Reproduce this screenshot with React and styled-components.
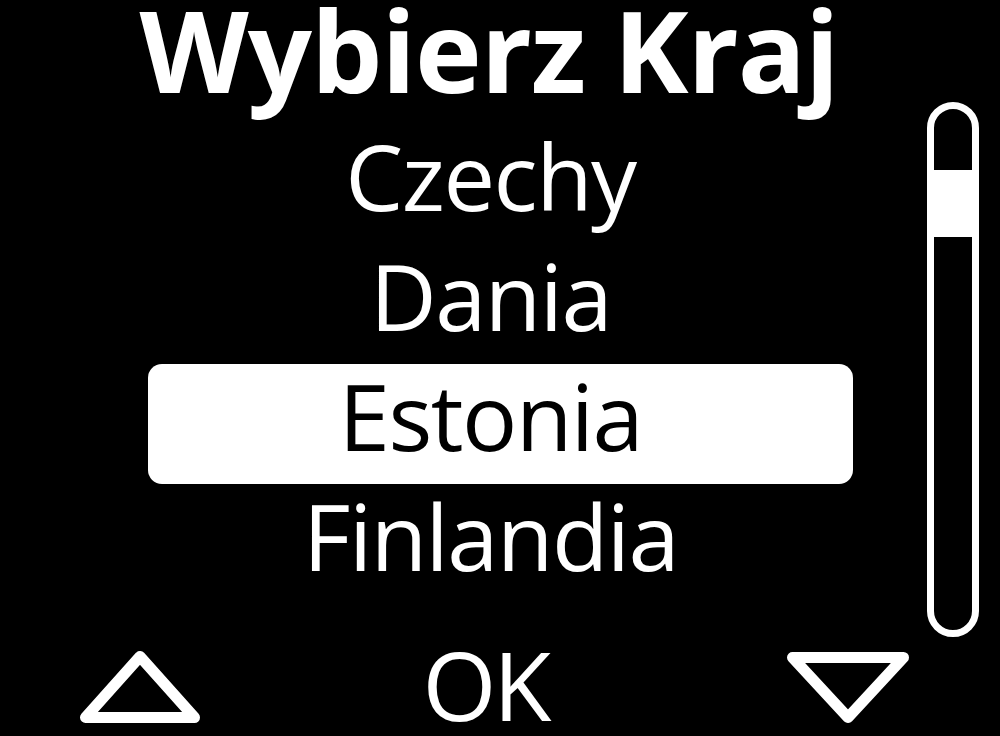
import React from "react";
import styled, { createGlobalStyle } from "styled-components";

const countries = ["Czechy", "Dania", "Estonia", "Finlandia"];
const selectedIndex = 2;

const GlobalStyle = createGlobalStyle`
  html, body {
    margin: 0;
    padding: 0;
    background: #000;
  }
  * {
    box-sizing: border-box;
  }
`;

function App() {
  return (
    <>
      <GlobalStyle />
      <Screen>
        <Title>Wybierz Kraj</Title>
        <Body>
          <List>
            {countries.map((name, i) => (
              <Row key={name} selected={i === selectedIndex}>
                {name}
              </Row>
            ))}
          </List>
          <Track>
            <Thumb style={{ marginTop: 61 }} />
          </Track>
        </Body>
        <Footer>
          <ArrowUp />
          <OkLabel>OK</OkLabel>
          <ArrowDown />
        </Footer>
      </Screen>
    </>
  );
}

function ArrowUp() {
  return (
    <Arrow width="120" height="72" viewBox="0 0 120 72">
      <polygon points="60,5.5 5.5,66.5 114.5,66.5" />
    </Arrow>
  );
}

function ArrowDown() {
  return (
    <Arrow width="122" height="71" viewBox="0 0 122 71" down>
      <polygon points="5.5,5.5 116.5,5.5 61,65.5" />
    </Arrow>
  );
}

const Screen = styled.div`
  width: 1000px;
  height: 736px;
  overflow: hidden;
  background: #000;
  color: #fff;
  font-family: "Open Sans", "Noto Sans", sans-serif;
  display: flex;
  flex-direction: column;
`;

const Title = styled.h1`
  margin: 0;
  height: 102px;
  padding-right: 22px;
  text-align: center;
  font-size: 113px;
  font-weight: 700;
  line-height: 98px;
  letter-spacing: -1px;
`;

const Body = styled.div`
  display: flex;
  height: 535px;
`;

const List = styled.ul`
  list-style: none;
  margin: 22px 0 0 148px;
  padding: 0;
  width: 705px;
`;

const Row = styled.li`
  height: 120px;
  padding-right: 20px;
  text-align: center;
  font-size: 92px;
  line-height: 104px;
  letter-spacing: -1.5px;
  border-radius: 14px;
  color: ${(p) => (p.selected ? "#000" : "#fff")};
  background: ${(p) => (p.selected ? "#fff" : "transparent")};
`;

const Track = styled.div`
  margin-left: 74px;
  width: 52px;
  height: 535px;
  border: 7px solid #fff;
  border-radius: 26px;
  display: flex;
  flex-direction: column;
`;

const Thumb = styled.div`
  height: 67px;
  background: #fff;
`;

const Footer = styled.div`
  flex: 1;
  display: grid;
  grid-template-columns: 200px 1fr 213px;
  align-items: start;
`;

const OkLabel = styled.div`
  text-align: center;
  padding-right: 16px;
  font-size: 95px;
  line-height: 94px;
  letter-spacing: -3px;
`;

const Arrow = styled.svg`
  margin-top: ${(p) => (p.down ? "15px" : "14px")};
  margin-left: ${(p) => (p.down ? "0" : "80px")};
  fill: none;
  stroke: #fff;
  stroke-width: 11;
  stroke-linejoin: round;
`;

export default App;
